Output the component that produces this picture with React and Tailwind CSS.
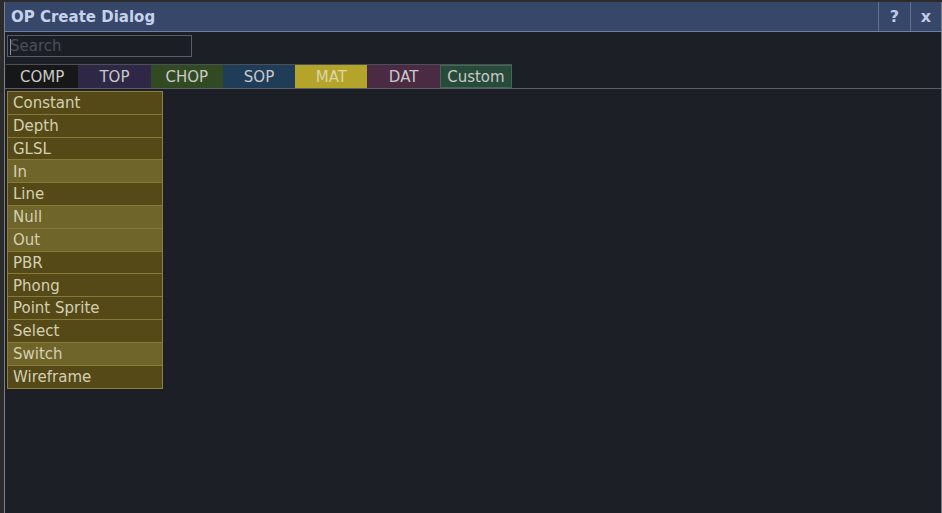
export default function App() {
  const tabs = [
    { name: "COMP", bg: "bg-[#171717]", text: "text-[#c9c9c9]" },
    { name: "TOP", bg: "bg-[#2e2745]", text: "text-[#c9c9c9]" },
    { name: "CHOP", bg: "bg-[#324a22]", text: "text-[#c9c9c9]" },
    { name: "SOP", bg: "bg-[#1f3c58]", text: "text-[#c9c9c9]" },
    { name: "MAT", bg: "bg-[#b4a52a]", text: "text-[#dcd6a8]" },
    { name: "DAT", bg: "bg-[#4b2b44]", text: "text-[#c9c9c9]" },
    { name: "Custom", bg: "bg-[#284a39] border border-[#3e6a55]", text: "text-[#c9c9c9]" },
  ];
  const items = [
    ["Constant", false],
    ["Depth", false],
    ["GLSL", false],
    ["In", true],
    ["Line", false],
    ["Null", true],
    ["Out", true],
    ["PBR", false],
    ["Phong", false],
    ["Point Sprite", false],
    ["Select", false],
    ["Switch", true],
    ["Wireframe", false],
  ];
  return (
    <div
      className="w-[942px] h-[513px] bg-[#2b2b2b] pt-[2px] pl-[4px] overflow-hidden"
      style={{ fontFamily: '"DejaVu Sans", Verdana, sans-serif' }}
    >
      <div className="h-full flex flex-col border-l border-r border-[#7a7f8a] bg-[#1d1f27]">
        <div className="h-[30px] shrink-0 flex items-stretch bg-[#36476a] border-b border-[#6d80a6]">
          <div className="flex-1 flex items-center pl-[6px] pt-[1px] text-[15px] font-bold text-[#c6d2ec]">
            OP Create Dialog
          </div>
          <div className="w-[32px] flex items-center justify-center pt-[1px] border-l border-[#5f7094] text-[16px] font-bold text-[#bccbe8]">
            ?
          </div>
          <div className="w-[31px] flex items-center justify-center pt-[1px] border-l border-[#5f7094] text-[16px] font-bold text-[#bccbe8]">
            x
          </div>
        </div>
        <div className="pl-[2px] pt-[3px]">
          <div className="w-[185px] h-[22px] border border-[#5a5d66] bg-[#1c1e25] flex items-center pl-[2px] pt-[1px] text-[15px] text-[#4b4f5b]">
            <span className="w-[1px] h-[16px] bg-[#8d93a3] mr-[-1px]"></span>
            Search
          </div>
        </div>
        <div className="mt-[7px] pl-[1px] flex border-b border-[#5b5e66]">
          <div className="flex border-t border-[#4c4f58]">
            {tabs.map((t) => (
              <div
                key={t.name}
                className={`w-[72.3px] h-[23px] flex items-center justify-center pt-[2px] text-[15px] ${t.bg} ${t.text}`}
              >
                {t.name}
              </div>
            ))}
          </div>
        </div>
        <div className="pl-[2px] pt-[2px]">
          <div className="w-[156px] border border-[#8c803a] flex flex-col">
            {items.map(([name, hi], i) => (
              <div
                key={name}
                className={`h-[22.8px] flex items-center pl-[5px] pt-[1px] text-[15px] text-[#d3cfb2] ${
                  hi ? "bg-[#6f652b]" : "bg-[#554a17]"
                } ${i < items.length - 1 ? "border-b border-[#857a36]" : ""}`}
              >
                {name}
              </div>
            ))}
          </div>
        </div>
      </div>
    </div>
  );
}
